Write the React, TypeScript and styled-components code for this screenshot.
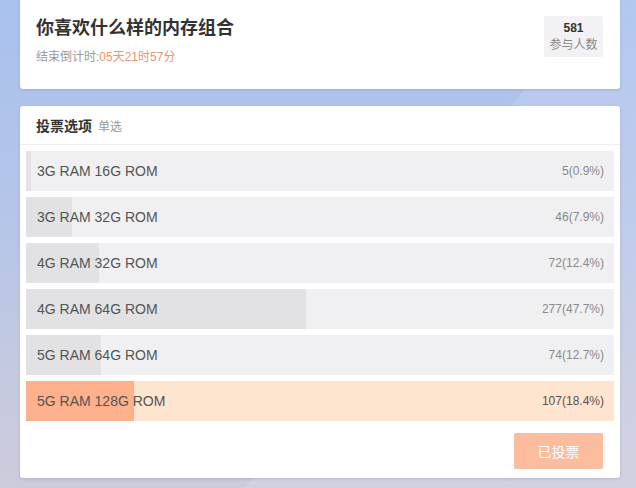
import React from 'react';
import styled, { createGlobalStyle } from 'styled-components';

// Types
interface VoteOption {
  id: string;
  label: string;
  count: number;
  percent: number;
  chosen?: boolean;
}

const GlobalStyle = createGlobalStyle`
  html, body {
    margin: 0;
    padding: 0;
  }
  body {
    width: 636px;
    height: 488px;
    overflow: hidden;
    font-family: "Liberation Sans", "Noto Sans CJK SC", sans-serif;
    background:
      linear-gradient(125deg, rgba(255, 255, 255, 0) 0%, rgba(255, 255, 255, 0) 60%, rgba(255, 255, 255, 0.12) 60%, rgba(255, 255, 255, 0.12) 100%),
      linear-gradient(180deg, #a9c1ee 0%, #b5c5e8 45%, #c6cadf 80%, #cccbdc 100%);
  }
`;

const Page = styled.div`
  display: flex;
  flex-direction: column;
  gap: 17px;
  padding: 0 16px 0 20px;
  width: 600px;
`;

const Card = styled.div`
  background: #fff;
  border-radius: 3px;
  box-shadow: 0 1px 3px rgba(60, 80, 130, 0.18);
`;

const TopCard = styled(Card)`
  display: flex;
  justify-content: space-between;
  align-items: flex-start;
  height: 89px;
  box-sizing: border-box;
  padding: 15px 17px 0 16px;
  border-top-left-radius: 0;
  border-top-right-radius: 0;
`;

const Title = styled.h1`
  margin: 0;
  font-size: 18px;
  line-height: 26px;
  font-weight: 700;
  color: #333;
`;

const Countdown = styled.div`
  margin-top: 7px;
  font-size: 12px;
  line-height: 18px;
  color: #999;
`;

const Remaining = styled.span`
  color: #f0946a;
`;

const Stats = styled.div`
  margin-top: 1px;
  width: 59px;
  height: 41px;
  display: flex;
  flex-direction: column;
  align-items: center;
  justify-content: center;
  background: #f2f2f4;
  border-radius: 2px;
`;

const StatNumber = styled.div`
  font-size: 12px;
  line-height: 17px;
  font-weight: 700;
  color: #333;
`;

const StatLabel = styled.div`
  font-size: 12px;
  line-height: 17px;
  color: #888;
`;

const VoteCard = styled(Card)`
  height: 372px;
  display: flex;
  flex-direction: column;
`;

const SectionHeader = styled.div`
  display: flex;
  align-items: center;
  gap: 6px;
  height: 38px;
  padding: 0 16px;
  border-bottom: 1px solid #eeeeef;
`;

const SectionTitle = styled.span`
  font-size: 14px;
  font-weight: 700;
  color: #333;
`;

const SectionHint = styled.span`
  font-size: 12px;
  color: #999;
`;

const OptionList = styled.div`
  display: flex;
  flex-direction: column;
  gap: 6px;
  padding: 6px 6px 0;
`;

const OptionRow = styled.div<{ $chosen?: boolean }>`
  position: relative;
  height: 40px;
  display: flex;
  align-items: center;
  justify-content: space-between;
  padding: 0 10px 0 11px;
  background: ${p => (p.$chosen ? '#fee5cf' : '#f0f0f2')};
  overflow: hidden;
`;

const Fill = styled.div<{ $chosen?: boolean }>`
  position: absolute;
  left: 0;
  top: 0;
  bottom: 0;
  background: ${p => (p.$chosen ? '#fcb18c' : '#e2e2e4')};
`;

const OptionLabel = styled.span`
  position: relative;
  font-size: 14px;
  color: #555;
`;

const OptionCount = styled.span<{ $chosen?: boolean }>`
  position: relative;
  font-size: 12px;
  color: ${p => (p.$chosen ? '#555' : '#8a8a8a')};
`;

const Footer = styled.div`
  display: flex;
  justify-content: flex-end;
  padding: 12px 17px 0 0;
`;

const VotedButton = styled.button`
  width: 89px;
  height: 36px;
  border: none;
  border-radius: 2px;
  background: #fbbd9d;
  color: #fff;
  font-family: "Liberation Sans", "Noto Sans CJK SC", sans-serif;
  font-size: 14px;
  cursor: default;
`;

const options: VoteOption[] = [
  { id: 'o1', label: '3G RAM 16G ROM', count: 5, percent: 0.9 },
  { id: 'o2', label: '3G RAM 32G ROM', count: 46, percent: 7.9 },
  { id: 'o3', label: '4G RAM 32G ROM', count: 72, percent: 12.4 },
  { id: 'o4', label: '4G RAM 64G ROM', count: 277, percent: 47.7 },
  { id: 'o5', label: '5G RAM 64G ROM', count: 74, percent: 12.7 },
  { id: 'o6', label: '5G RAM 128G ROM', count: 107, percent: 18.4, chosen: true },
];

export default function App() {
  return (
    <>
      <GlobalStyle />
      <Page>
        <TopCard>
          <div>
            <Title>你喜欢什么样的内存组合</Title>
            <Countdown>
              结束倒计时:<Remaining>05天21时57分</Remaining>
            </Countdown>
          </div>
          <Stats>
            <StatNumber>581</StatNumber>
            <StatLabel>参与人数</StatLabel>
          </Stats>
        </TopCard>

        <VoteCard>
          <SectionHeader>
            <SectionTitle>投票选项</SectionTitle>
            <SectionHint>单选</SectionHint>
          </SectionHeader>
          <OptionList>
            {options.map(opt => (
              <OptionRow key={opt.id} $chosen={opt.chosen}>
                <Fill $chosen={opt.chosen} style={{ width: `${opt.percent}%` }} />
                <OptionLabel>{opt.label}</OptionLabel>
                <OptionCount $chosen={opt.chosen}>
                  {opt.count}({opt.percent}%)
                </OptionCount>
              </OptionRow>
            ))}
          </OptionList>
          <Footer>
            <VotedButton disabled>已投票</VotedButton>
          </Footer>
        </VoteCard>
      </Page>
    </>
  );
}
